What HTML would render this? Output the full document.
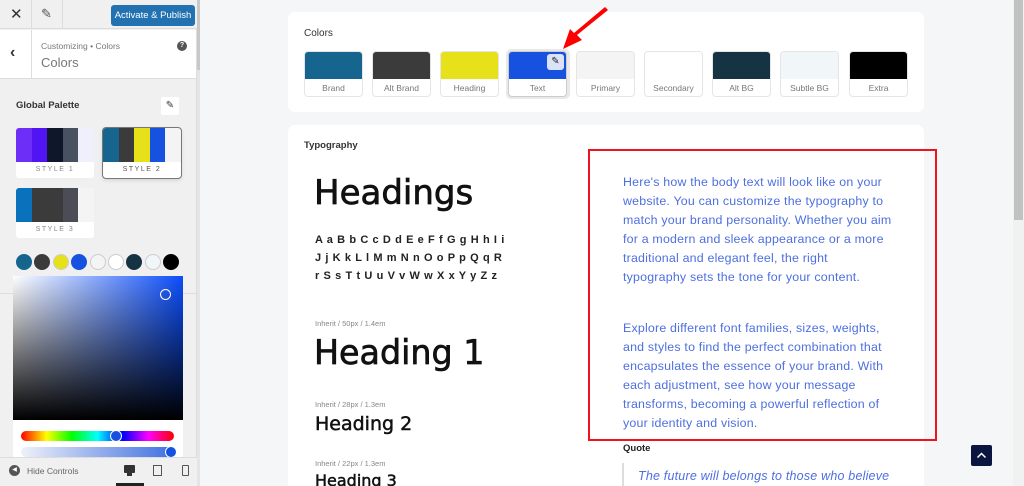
<!DOCTYPE html>
<html><head><meta charset="utf-8"><style>
*{box-sizing:border-box;margin:0;padding:0}
html,body{width:1024px;height:486px;overflow:hidden}
body{background:#f5f6f8;font-family:"Liberation Sans",sans-serif;position:relative}
.abs{position:absolute}
.sb{left:0;top:0;width:197px;height:486px;background:#f0f0f1;border-right:1px solid #ddd}
.sw{width:59px;height:46px;border:1px solid #e3e5e8;border-radius:4px;background:#fff;overflow:hidden;top:51px}
.sw div{height:27px}
.sw span{display:block;text-align:center;font-size:8.5px;color:#777;line-height:19px}
.pc{width:78px;height:50px;background:#fff;border-radius:3px;overflow:hidden;display:flex;flex-wrap:wrap}
.pc i{display:block;height:34px;width:15.6px}
.pc b{display:block;width:100%;font-size:7px;letter-spacing:1.5px;color:#888;text-align:center;line-height:16px;font-weight:normal}
.c{width:16px;height:16px;border-radius:50%;top:254px;border:1px solid #ccc}
.body{color:#4d6fe0;font-size:12.4px;line-height:19px;left:623px;white-space:nowrap;letter-spacing:.2px}
.hd{font-family:'DejaVu Sans',sans-serif;color:#111;-webkit-text-stroke:.7px #111;transform-origin:left}
</style></head><body>
<div class="abs sb"></div>
<div class="abs" style="left:0;top:0;width:197px;height:29px;background:#f0f0f1;border-bottom:1px solid #ddd"></div>
<div class="abs" style="left:31px;top:0;width:1px;height:29px;background:#ddd"></div>
<div class="abs" style="left:62px;top:0;width:1px;height:29px;background:#ddd"></div>
<div class="abs" style="left:10px;top:5px;font-size:15px;color:#333">✕</div>
<div class="abs" style="left:41px;top:6px;font-size:13px;color:#555">✎</div>
<div class="abs" style="left:111px;top:5px;width:84px;height:21px;background:#2271b1;border-radius:3px;color:#fff;font-size:9.5px;text-align:center;line-height:21px">Activate &amp; Publish</div>
<div class="abs" style="left:0;top:30px;width:196px;height:49px;background:#fff;border-bottom:1px solid #ddd"></div>
<div class="abs" style="left:31px;top:30px;width:1px;height:49px;background:#ddd"></div>
<div class="abs" style="left:10px;top:44px;font-size:16px;color:#333;font-weight:bold">‹</div>
<div class="abs" style="left:41px;top:41px;font-size:8.5px;color:#777">Customizing • Colors</div>
<div class="abs" style="left:41px;top:55px;font-size:13px;color:#777">Colors</div>
<div class="abs" style="left:177px;top:41px;width:10px;height:10px;border-radius:50%;background:#555;color:#fff;font-size:7px;text-align:center;line-height:10px;font-weight:bold">?</div>
<div class="abs" style="left:16px;top:100px;font-size:9.5px;font-weight:bold;color:#333">Global Palette</div>
<div class="abs" style="left:161px;top:97px;width:18px;height:18px;background:#fff;border-radius:2px;font-size:10px;text-align:center;line-height:18px;color:#333">✎</div>
<div class="abs pc" style="left:16px;top:128px"><i style="background:#6d2ef7"></i><i style="background:#5015f2"></i><i style="background:#0f172a"></i><i style="background:#475160"></i><i style="background:#f0f0fc"></i><b>STYLE 1</b></div>
<div class="abs pc" style="left:103px;top:128px;outline:1px solid #777;box-shadow:0 2px 4px rgba(0,0,0,.15)"><i style="background:#16658f"></i><i style="background:#3b3b3b"></i><i style="background:#e7e11a"></i><i style="background:#1652df"></i><i style="background:#f4f4f4"></i><b style="color:#555">STYLE 2</b></div>
<div class="abs pc" style="left:16px;top:188px"><i style="background:#0a72bd"></i><i style="background:#3b3b3b;width:31.2px"></i><i style="background:#4a4d55"></i><i style="background:#f4f4f4"></i><b>STYLE 3</b></div>
<div class="abs c" style="left:16px;background:#16658f;border-color:#16658f"></div>
<div class="abs c" style="left:34px;background:#3b3b3b;border-color:#3b3b3b"></div>
<div class="abs c" style="left:53px;background:#e7e11a"></div>
<div class="abs c" style="left:71px;background:#1652df;border-color:#1652df"></div>
<div class="abs c" style="left:90px;background:#f4f4f4"></div>
<div class="abs c" style="left:108px;background:#fff"></div>
<div class="abs c" style="left:126px;background:#163344;border-color:#163344"></div>
<div class="abs c" style="left:145px;background:#f1f6f9"></div>
<div class="abs c" style="left:163px;background:#000;border-color:#000"></div>
<div class="abs" style="left:0;top:293px;width:196px;height:1px;background:#ddd"></div>
<div class="abs" style="left:13px;top:276px;width:170px;height:182px;background:#fff"></div>
<div class="abs" style="left:13px;top:276px;width:170px;height:144px;background:linear-gradient(to top,#000,rgba(0,0,0,0)),linear-gradient(to right,#fff,#0b4dfa)"></div>
<div class="abs" style="left:160px;top:289px;width:11px;height:11px;border-radius:50%;border:1.5px solid #fff"></div>
<div class="abs" style="left:21px;top:431px;width:153px;height:10px;border-radius:5px;background:linear-gradient(to right,red,#ff0,#0f0,#0ff,#00f,#f0f,red)"></div>
<div class="abs" style="left:110px;top:430px;width:12px;height:12px;border-radius:50%;background:#1652df;border:1.5px solid #fff"></div>
<div class="abs" style="left:21px;top:447px;width:155px;height:10px;border-radius:5px;background:linear-gradient(to right,#eef1f8,#3d6ee0)"></div>
<div class="abs" style="left:165px;top:446px;width:12px;height:12px;border-radius:50%;background:#1652df;border:1.5px solid #fff"></div>
<div class="abs" style="left:0;top:457px;width:197px;height:29px;background:#f0f0f1;border-top:1px solid #ddd"></div>
<div class="abs" style="left:9px;top:465px;width:11px;height:11px;border-radius:50%;background:#555;color:#fff;font-size:6px;line-height:11px;text-align:center">◀</div>
<div class="abs" style="left:27px;top:466px;font-size:8.5px;color:#666">Hide Controls</div>
<div class="abs" style="left:124px;top:465px;width:11px;height:8px;background:#333;border-radius:1px"></div>
<div class="abs" style="left:127px;top:473px;width:5px;height:3px;background:#333"></div>
<div class="abs" style="left:116px;top:483px;width:28px;height:3px;background:#222"></div>
<div class="abs" style="left:153px;top:465px;width:9px;height:11px;border:1.5px solid #555"></div>
<div class="abs" style="left:182px;top:465px;width:7px;height:11px;border:1.5px solid #555;border-radius:1px"></div>
<div class="abs" style="left:197px;top:0;width:3px;height:486px;background:#e5e5e5"></div>
<div class="abs" style="left:197px;top:0;width:3px;height:70px;background:#c8c8c8"></div>
<div class="abs" style="left:1013px;top:0;width:11px;height:486px;background:#f1f1f1"></div>
<div class="abs" style="left:1014px;top:0;width:9px;height:220px;background:#c1c1c1"></div>
<div class="abs" style="left:288px;top:-10px;width:636px;height:10px;background:#fff;border-radius:6px"></div>
<div class="abs" style="left:288px;top:12px;width:636px;height:100px;background:#fff;border-radius:7px"></div>
<div class="abs" style="left:304px;top:28px;font-size:10px;color:#333">Colors</div>
<div class="abs sw" style="left:304px"><div style="background:#16658f"></div><span>Brand</span></div>
<div class="abs sw" style="left:372px"><div style="background:#3b3b3b"></div><span>Alt Brand</span></div>
<div class="abs sw" style="left:440px"><div style="background:#e7e11a"></div><span>Heading</span></div>
<div class="abs" style="left:506px;top:49px;width:64px;height:50px;border-radius:5px;background:#e9e9ea"></div>
<div class="abs sw" style="left:508px;top:51px;border-color:#ccc"><div style="background:#1652df"></div><span>Text</span></div>
<div class="abs" style="left:547px;top:54px;width:17px;height:16px;border-radius:3px;background:#dbe3f8;font-size:10px;text-align:center;line-height:16px;color:#222">✎</div>
<div class="abs sw" style="left:576px"><div style="background:#f4f4f4"></div><span>Primary</span></div>
<div class="abs sw" style="left:644px"><div style="background:#fff"></div><span>Secondary</span></div>
<div class="abs sw" style="left:712px"><div style="background:#163344"></div><span>Alt BG</span></div>
<div class="abs sw" style="left:780px"><div style="background:#f1f6f9"></div><span>Subtle BG</span></div>
<div class="abs sw" style="left:849px"><div style="background:#000"></div><span>Extra</span></div>
<svg class="abs" style="left:555px;top:5px" width="60" height="50"><path d="M53 5 L22 30 L27 35 L8 44 L15 24 L19 28 L50 2 Z" fill="#f00"/></svg>
<div class="abs" style="left:288px;top:125px;width:636px;height:370px;background:#fff;border-radius:7px"></div>
<div class="abs" style="left:304px;top:140px;font-size:9.5px;font-weight:bold;color:#333">Typography</div>
<div class="abs hd" style="left:314px;top:173px;font-size:34px">Headings</div>
<div class="abs" style="left:315px;top:231px;font-size:11px;line-height:18px;font-weight:bold;color:#222;letter-spacing:.6px;white-space:nowrap">A a B b C c D d E e F f G g H h I i<br>J j K k L l M m N n O o P p Q q R<br>r S s T t U u V v W w X x Y y Z z</div>
<div class="abs" style="left:315px;top:319px;font-size:7.5px;color:#888">Inherit / 50px / 1.4em</div>
<div class="abs hd" style="left:314px;top:333px;font-size:34px;transform:scaleX(.98)">Heading 1</div>
<div class="abs" style="left:315px;top:400px;font-size:7.5px;color:#888">Inherit / 28px / 1.3em</div>
<div class="abs hd" style="left:315px;top:413px;font-size:19px;-webkit-text-stroke:.5px #111">Heading 2</div>
<div class="abs" style="left:315px;top:459px;font-size:7.5px;color:#888">Inherit / 22px / 1.3em</div>
<div class="abs hd" style="left:315px;top:471px;font-size:16px;-webkit-text-stroke:.5px #111">Heading 3</div>
<div class="abs" style="left:588px;top:149px;width:349px;height:292px;border:2px solid #f0131e"></div>
<div class="abs body" style="top:173px">Here's how the body text will look like on your<br>website. You can customize the typography to<br>match your brand personality. Whether you aim<br>for a modern and sleek appearance or a more<br>traditional and elegant feel, the right<br>typography sets the tone for your content.</div>
<div class="abs body" style="top:319px">Explore different font families, sizes, weights,<br>and styles to find the perfect combination that<br>encapsulates the essence of your brand. With<br>each adjustment, see how your message<br>transforms, becoming a powerful reflection of<br>your identity and vision.</div>
<div class="abs" style="left:623px;top:443px;font-size:9.5px;font-weight:bold;color:#222">Quote</div>
<div class="abs" style="left:622px;top:463px;width:2px;height:30px;background:#ddd"></div>
<div class="abs" style="left:638px;top:469px;font-size:12.5px;font-style:italic;color:#4d6fe0;letter-spacing:.2px">The future will belongs to those who believe</div>
<div class="abs" style="left:971px;top:445px;width:21px;height:21px;background:#0b1640;border-radius:2px"></div>
<svg class="abs" style="left:971px;top:445px" width="21" height="21"><path d="M6.5 12.5 L10.5 8.5 L14.5 12.5" stroke="#fff" stroke-width="1.5" fill="none"/></svg>
</body></html>
